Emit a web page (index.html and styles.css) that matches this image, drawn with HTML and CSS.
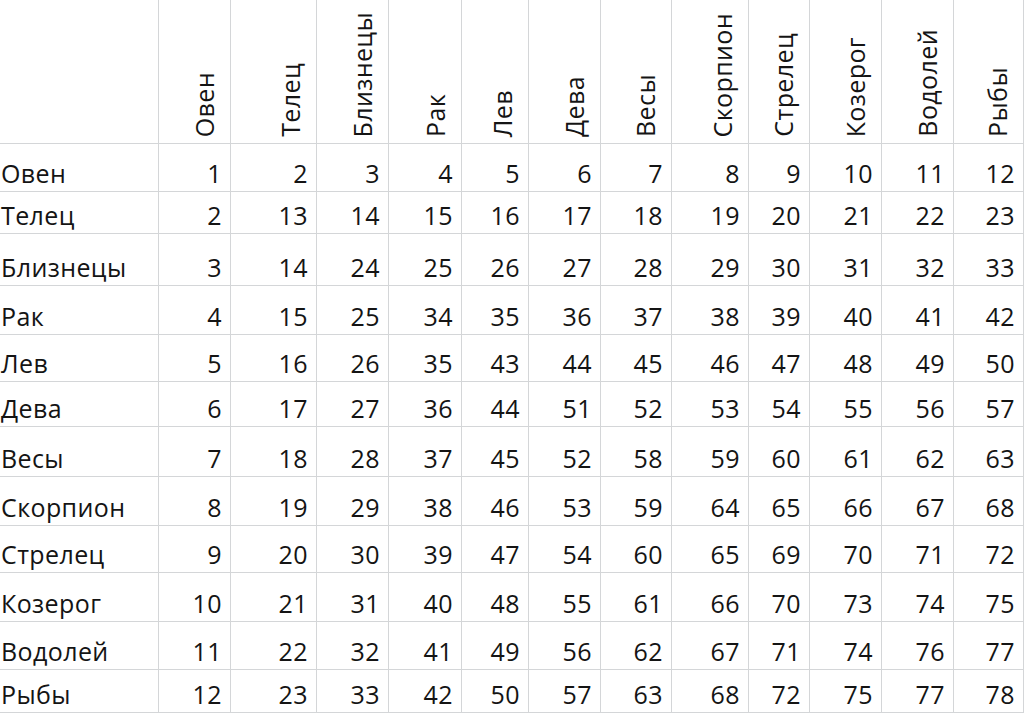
FILE: index.html
```html
<!DOCTYPE html>
<html lang="ru">
<head>
<meta charset="utf-8">
<title>Совместимость знаков</title>
<link rel="stylesheet" href="styles.css">
</head>
<body>
<div class="sheet">
  <div class="cell head corner"></div>
  <div class="cell head"><span class="vt">Овен</span></div>
  <div class="cell head"><span class="vt">Телец</span></div>
  <div class="cell head"><span class="vt">Близнецы</span></div>
  <div class="cell head"><span class="vt">Рак</span></div>
  <div class="cell head"><span class="vt">Лев</span></div>
  <div class="cell head"><span class="vt">Дева</span></div>
  <div class="cell head"><span class="vt">Весы</span></div>
  <div class="cell head"><span class="vt">Скорпион</span></div>
  <div class="cell head"><span class="vt">Стрелец</span></div>
  <div class="cell head"><span class="vt">Козерог</span></div>
  <div class="cell head"><span class="vt">Водолей</span></div>
  <div class="cell head"><span class="vt">Рыбы</span></div>

  <div class="cell name">Овен</div><div class="cell num">1</div><div class="cell num">2</div><div class="cell num">3</div><div class="cell num">4</div><div class="cell num">5</div><div class="cell num">6</div><div class="cell num">7</div><div class="cell num">8</div><div class="cell num">9</div><div class="cell num">10</div><div class="cell num">11</div><div class="cell num">12</div>
  <div class="cell name">Телец</div><div class="cell num">2</div><div class="cell num">13</div><div class="cell num">14</div><div class="cell num">15</div><div class="cell num">16</div><div class="cell num">17</div><div class="cell num">18</div><div class="cell num">19</div><div class="cell num">20</div><div class="cell num">21</div><div class="cell num">22</div><div class="cell num">23</div>
  <div class="cell name">Близнецы</div><div class="cell num">3</div><div class="cell num">14</div><div class="cell num">24</div><div class="cell num">25</div><div class="cell num">26</div><div class="cell num">27</div><div class="cell num">28</div><div class="cell num">29</div><div class="cell num">30</div><div class="cell num">31</div><div class="cell num">32</div><div class="cell num">33</div>
  <div class="cell name">Рак</div><div class="cell num">4</div><div class="cell num">15</div><div class="cell num">25</div><div class="cell num">34</div><div class="cell num">35</div><div class="cell num">36</div><div class="cell num">37</div><div class="cell num">38</div><div class="cell num">39</div><div class="cell num">40</div><div class="cell num">41</div><div class="cell num">42</div>
  <div class="cell name">Лев</div><div class="cell num">5</div><div class="cell num">16</div><div class="cell num">26</div><div class="cell num">35</div><div class="cell num">43</div><div class="cell num">44</div><div class="cell num">45</div><div class="cell num">46</div><div class="cell num">47</div><div class="cell num">48</div><div class="cell num">49</div><div class="cell num">50</div>
  <div class="cell name">Дева</div><div class="cell num">6</div><div class="cell num">17</div><div class="cell num">27</div><div class="cell num">36</div><div class="cell num">44</div><div class="cell num">51</div><div class="cell num">52</div><div class="cell num">53</div><div class="cell num">54</div><div class="cell num">55</div><div class="cell num">56</div><div class="cell num">57</div>
  <div class="cell name">Весы</div><div class="cell num">7</div><div class="cell num">18</div><div class="cell num">28</div><div class="cell num">37</div><div class="cell num">45</div><div class="cell num">52</div><div class="cell num">58</div><div class="cell num">59</div><div class="cell num">60</div><div class="cell num">61</div><div class="cell num">62</div><div class="cell num">63</div>
  <div class="cell name">Скорпион</div><div class="cell num">8</div><div class="cell num">19</div><div class="cell num">29</div><div class="cell num">38</div><div class="cell num">46</div><div class="cell num">53</div><div class="cell num">59</div><div class="cell num">64</div><div class="cell num">65</div><div class="cell num">66</div><div class="cell num">67</div><div class="cell num">68</div>
  <div class="cell name">Стрелец</div><div class="cell num">9</div><div class="cell num">20</div><div class="cell num">30</div><div class="cell num">39</div><div class="cell num">47</div><div class="cell num">54</div><div class="cell num">60</div><div class="cell num">65</div><div class="cell num">69</div><div class="cell num">70</div><div class="cell num">71</div><div class="cell num">72</div>
  <div class="cell name">Козерог</div><div class="cell num">10</div><div class="cell num">21</div><div class="cell num">31</div><div class="cell num">40</div><div class="cell num">48</div><div class="cell num">55</div><div class="cell num">61</div><div class="cell num">66</div><div class="cell num">70</div><div class="cell num">73</div><div class="cell num">74</div><div class="cell num">75</div>
  <div class="cell name">Водолей</div><div class="cell num">11</div><div class="cell num">22</div><div class="cell num">32</div><div class="cell num">41</div><div class="cell num">49</div><div class="cell num">56</div><div class="cell num">62</div><div class="cell num">67</div><div class="cell num">71</div><div class="cell num">74</div><div class="cell num">76</div><div class="cell num">77</div>
  <div class="cell name">Рыбы</div><div class="cell num">12</div><div class="cell num">23</div><div class="cell num">33</div><div class="cell num">42</div><div class="cell num">50</div><div class="cell num">57</div><div class="cell num">63</div><div class="cell num">68</div><div class="cell num">72</div><div class="cell num">75</div><div class="cell num">77</div><div class="cell num">78</div>
</div>
</body>
</html>
```

FILE: styles.css
```css
html, body {
  margin: 0;
  padding: 0;
  background: #ffffff;
  overflow: hidden;
}

.sheet {
  display: grid;
  grid-template-columns: 159px 72px 86px 72px 73px 67px 72px 71px 77px 61px 72px 72px 70px;
  grid-template-rows: 144px 48px 42px 52px 49px 47px 45px 50px 49px 47px 49px 48px 43px;
  font-family: "Open Sans", "Noto Sans", sans-serif;
  font-size: 25px;
  letter-spacing: 0.4px;
  color: #141414;
  width: 1024px;
}

.cell {
  display: flex;
  box-sizing: border-box;
  border-right: 1px solid #d4d6d8;
  border-bottom: 1px solid #d4d6d8;
  line-height: 1;
  overflow: hidden;
  white-space: nowrap;
}

.head {
  justify-content: flex-end;
  align-items: flex-end;
  padding-right: 13px;
  padding-bottom: 6px;
}

.vt {
  writing-mode: vertical-rl;
  transform: rotate(180deg);
}

.name {
  align-items: flex-end;
  padding-left: 1px;
  padding-bottom: 5px;
}

.num {
  justify-content: flex-end;
  align-items: flex-end;
  padding-right: 8px;
  padding-bottom: 5px;
}
```
